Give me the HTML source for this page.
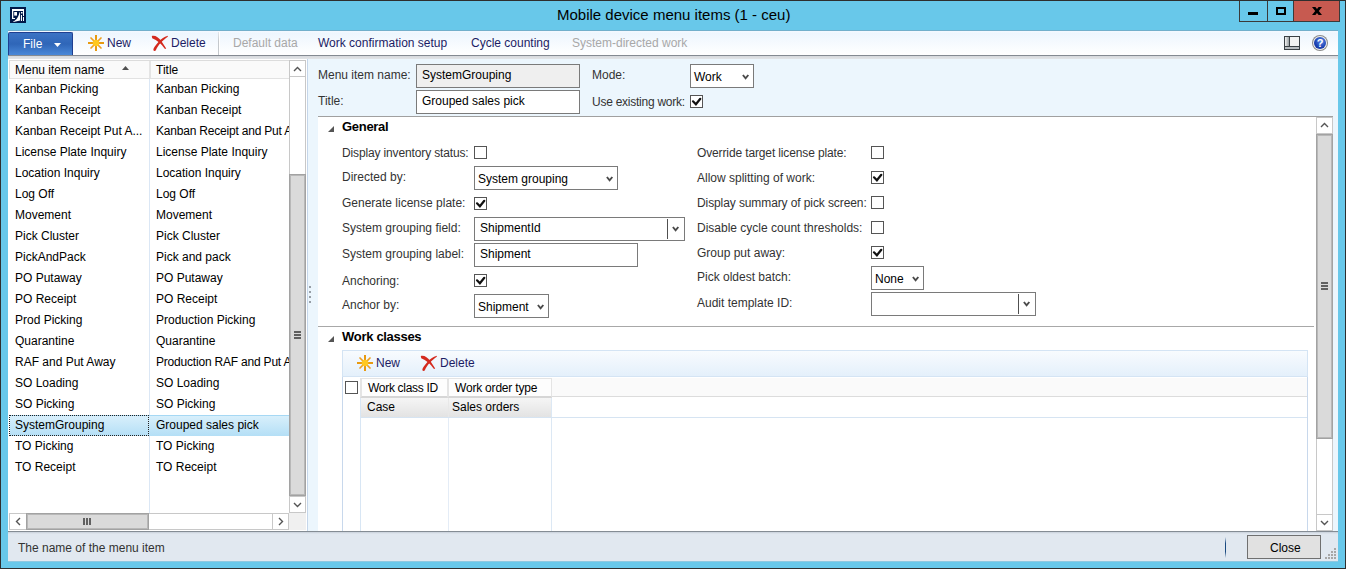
<!DOCTYPE html>
<html><head><meta charset="utf-8">
<style>
*{margin:0;padding:0;box-sizing:border-box}
html,body{width:1346px;height:569px;overflow:hidden;background:#2e2e2e;font-family:"Liberation Sans",sans-serif;font-size:12px;color:#000}
.a{position:absolute}
.t{position:absolute;white-space:nowrap;line-height:15px;height:15px}
#frame{left:1px;top:1px;width:1344px;height:567px;background:#68c8ea}
.cb{position:absolute;width:13px;height:13px;border:1px solid #555;background:#fff}
.inp{position:absolute;border:1px solid #7a7a7a;background:#fff}
.lbl{color:#333}
</style></head><body>
<div id="frame" class="a"></div>
<!-- app icon -->
<svg class="a" style="left:10px;top:7px" width="16" height="16" viewBox="0 0 16 16"><rect width="16" height="16" fill="#001848"/><g fill="#fff"><rect x="2" y="2" width="12" height="2"/><rect x="2" y="2" width="1.3" height="10"/><rect x="2" y="11" width="3" height="1"/><rect x="13" y="2" width="1" height="7"/><rect x="4.2" y="5" width="2.8" height="3.6"/><path d="M3 14.6C5 13.5 8 12.5 9.5 5.3L10 5.3L10.2 13.5C8 14 5.5 14.5 3.5 15Z"/><rect x="11" y="5" width="1.5" height="1.5"/><rect x="11" y="8" width="1" height="6"/><rect x="13" y="10" width="1" height="4"/></g></svg>
<!-- title -->
<div class="t" style="left:557px;top:6px;font-size:15px;line-height:17px;height:17px;color:#000">Mobile device menu items (1 - ceu)</div>
<!-- caption buttons -->
<div class="a" style="left:1239px;top:1px;width:101px;height:21px;border:1px solid #3a3a3a;border-top:none;background:#68c8ea"></div>
<div class="a" style="left:1267px;top:1px;width:1px;height:21px;background:#3a3a3a"></div>
<div class="a" style="left:1293px;top:1px;width:47px;height:21px;border:1px solid #3a3a3a;border-top:none;background:#c75a50"></div>
<div class="a" style="left:1248px;top:12px;width:10px;height:3px;background:#000"></div>
<div class="a" style="left:1276px;top:7px;width:10px;height:8px;border:2px solid #000"></div>
<svg class="a" style="left:1312px;top:7px" width="10" height="8" viewBox="0 0 10 8"><path d="M0 0H3.4L5 2L6.6 0H10L6.8 4L10 8H6.6L5 6L3.4 8H0L3.2 4Z" fill="#000"/></svg>

<!-- client -->
<div class="a" style="left:8px;top:31px;width:1330px;height:530px;background:#eef6fd"></div>
<!-- toolbar -->
<div class="a" style="left:8px;top:30px;width:1330px;height:1px;background:#72afcb"></div>
<div class="a" style="left:8px;top:31px;width:1330px;height:25px;background:linear-gradient(#f4f9ff,#eef6fe 10%,#ffffff);border-bottom:1px solid #848a92"></div>
<div class="a" style="left:8px;top:56px;width:1330px;height:3px;background:linear-gradient(#d6d9dd,#e2e4e7)"></div>
<div class="a" style="left:8px;top:32px;width:65px;height:23px;background:linear-gradient(#3c73c4,#2f66b8 50%,#4a88d8);border:1px solid #1f3f90;border-bottom:none;border-radius:2px 2px 0 0"></div>
<div class="t" style="left:23px;top:37px;color:#fff">File</div>
<svg class="a" style="left:54px;top:43px" width="7" height="4"><path d="M0 0H7L3.5 4Z" fill="#fff"/></svg>
<!-- toolbar items -->
<svg class="a" style="left:88px;top:35px" width="16" height="16" viewBox="0 0 16 16"><g stroke="#e89a10" stroke-width="2"><path d="M8 0V16M0 8H16"/></g><g stroke="#eea020" stroke-width="1.7" stroke-linecap="round"><path d="M3 3L13 13M13 3L3 13"/></g><circle cx="8" cy="8" r="3.3" fill="#ffc820"/></svg>
<div class="t" style="left:107px;top:36px;color:#1c1c64">New</div>
<svg class="a" style="left:148px;top:32px" width="24" height="22" viewBox="0 0 24 22"><path d="M3.8 4C7.5 3.2 10.5 5.5 13 8.6L18.2 16.4L17 17C15 14.2 13.5 12.3 11.2 10.4C9 8.6 6.5 7.2 4.2 6.2Z" fill="#d42a1e"/><path d="M19.8 3.8C16 4.6 12.8 7.3 10.2 10.3C7.6 13.3 5.4 16 5.3 18C5.8 19.3 7.4 19 7.9 18.2C8.9 15.8 10.5 13.2 12.8 10.8C15.2 8.4 17.4 6.3 19.8 4.7Z" fill="#d42a1e"/></svg>
<div class="t" style="left:171px;top:36px;color:#1c1c64">Delete</div>
<div class="a" style="left:218px;top:32px;width:1px;height:23px;background:linear-gradient(#e4e8ec,#c4c8cc 40%,#c4c8cc)"></div><div class="a" style="left:219px;top:32px;width:1px;height:23px;background:#fff"></div>
<div class="t" style="left:233px;top:36px;color:#a8a8a8">Default data</div>
<div class="t" style="left:318px;top:36px;color:#1c1c64">Work confirmation setup</div>
<div class="t" style="left:471px;top:36px;color:#1c1c64">Cycle counting</div>
<div class="t" style="left:572px;top:36px;color:#a8a8a8">System-directed work</div>
<!-- layout icon -->
<div class="a" style="left:1284px;top:36px;width:16px;height:14px;background:#3a4045"></div>
<div class="a" style="left:1285px;top:37px;width:4px;height:9px;background:linear-gradient(90deg,#f4f4f4,#9aa0a4)"></div>
<div class="a" style="left:1290px;top:37px;width:9px;height:9px;background:#f2f2f2"></div>
<div class="a" style="left:1285px;top:47px;width:14px;height:2px;background:#b8bcc0"></div>
<!-- help icon -->
<div class="a" style="left:1312px;top:35px;width:16px;height:16px;border-radius:50%;background:#8a8a8a"></div>
<div class="a" style="left:1313px;top:36px;width:14px;height:14px;border-radius:50%;background:#f0f0f0"></div>
<div class="a" style="left:1314px;top:37px;width:12px;height:12px;border-radius:50%;background:radial-gradient(circle at 60% 35%,#5a8ae8,#1a3fb0 60%,#0a2a90)"></div>
<div class="a" style="left:1316px;top:35px;width:8px;height:16px;font-size:11px;font-weight:bold;color:#fff;text-align:center;line-height:16px">?</div>
<!-- left grid -->
<div class="a" style="left:8px;top:59px;width:300px;height:472px;background:#f6f8fb"></div>
<div class="a" style="left:8px;top:59px;width:299px;height:472px;background:#fff"></div>
<div class="a" style="left:9px;top:60px;width:280px;height:1px;background:#dcdcdc"></div>
<div class="a" style="left:9px;top:60px;width:1px;height:19px;background:#dcdcdc"></div>
<div class="a" style="left:10px;top:61px;width:279px;height:18px;background:#fafafa;border-bottom:1px solid #e2e2e2"></div>
<div class="a" style="left:149px;top:61px;width:2px;height:17px;background:#e4e4e4"></div>
<div class="a" style="left:149px;top:79px;width:1px;height:434px;background:#dbe7f5"></div>
<div class="t" style="left:15px;top:63px">Menu item name</div>
<svg class="a" style="left:122px;top:66px" width="7" height="4"><path d="M0 4H7L3.5 0Z" fill="#505050"/></svg>
<div class="t" style="left:156px;top:63px">Title</div>
<!-- selected row -->
<div class="a" style="left:10px;top:415px;width:279px;height:21px;background:linear-gradient(#a6d8f4 1px,#d8effb 1px,#b4dff6)"></div>
<div class="a" style="left:9px;top:415px;width:140px;height:21px;border:1px dotted #222"></div>
<div class="t" style="left:15px;top:82px">Kanban Picking</div>
<div class="a" style="left:150px;top:61px;width:139px;height:452px;overflow:hidden">
<div class="t" style="left:6px;top:21px">Kanban Picking</div>
<div class="t" style="left:6px;top:42px">Kanban Receipt</div>
<div class="t" style="left:6px;top:63px;letter-spacing:-0.2px">Kanban Receipt and Put Away</div>
<div class="t" style="left:6px;top:84px">License Plate Inquiry</div>
<div class="t" style="left:6px;top:105px">Location Inquiry</div>
<div class="t" style="left:6px;top:126px">Log Off</div>
<div class="t" style="left:6px;top:147px">Movement</div>
<div class="t" style="left:6px;top:168px">Pick Cluster</div>
<div class="t" style="left:6px;top:189px">Pick and pack</div>
<div class="t" style="left:6px;top:210px">PO Putaway</div>
<div class="t" style="left:6px;top:231px">PO Receipt</div>
<div class="t" style="left:6px;top:252px">Production Picking</div>
<div class="t" style="left:6px;top:273px">Quarantine</div>
<div class="t" style="left:6px;top:294px;letter-spacing:-0.2px">Production RAF and Put Away</div>
<div class="t" style="left:6px;top:315px">SO Loading</div>
<div class="t" style="left:6px;top:336px">SO Picking</div>
<div class="t" style="left:6px;top:357px">Grouped sales pick</div>
<div class="t" style="left:6px;top:378px">TO Picking</div>
<div class="t" style="left:6px;top:399px">TO Receipt</div>
</div>
<div class="t" style="left:15px;top:103px">Kanban Receipt</div>
<div class="t" style="left:15px;top:124px">Kanban Receipt Put A...</div>
<div class="t" style="left:15px;top:145px">License Plate Inquiry</div>
<div class="t" style="left:15px;top:166px">Location Inquiry</div>
<div class="t" style="left:15px;top:187px">Log Off</div>
<div class="t" style="left:15px;top:208px">Movement</div>
<div class="t" style="left:15px;top:229px">Pick Cluster</div>
<div class="t" style="left:15px;top:250px">PickAndPack</div>
<div class="t" style="left:15px;top:271px">PO Putaway</div>
<div class="t" style="left:15px;top:292px">PO Receipt</div>
<div class="t" style="left:15px;top:313px">Prod Picking</div>
<div class="t" style="left:15px;top:334px">Quarantine</div>
<div class="t" style="left:15px;top:355px">RAF and Put Away</div>
<div class="t" style="left:15px;top:376px">SO Loading</div>
<div class="t" style="left:15px;top:397px">SO Picking</div>
<div class="t" style="left:15px;top:418px">SystemGrouping</div>
<div class="t" style="left:15px;top:439px">TO Picking</div>
<div class="t" style="left:15px;top:460px">TO Receipt</div>
<!-- clip overlay for col2 at scrollbar -->
<!-- v scrollbar -->
<div class="a" style="left:289px;top:60px;width:17px;height:453px;background:#fff;border:1px solid #c8c8c8;border-width:0 1px"></div>
<div class="a" style="left:289px;top:60px;width:17px;height:17px;background:#fff;border:1px solid #c8c8c8"></div>
<svg class="a" style="left:293px;top:66px" width="9" height="6"><path d="M1 5L4.5 1.5L8 5" stroke="#555" stroke-width="1.4" fill="none"/></svg>
<div class="a" style="left:289px;top:174px;width:17px;height:322px;background:#dadada;border:1px solid #a2a2a2;box-shadow:inset 1px 1px #b8b8b8,inset -1px -1px #b8b8b8"></div>
<div class="a" style="left:294px;top:331px;width:7px;height:2px;background:#606060"></div>
<div class="a" style="left:294px;top:334px;width:7px;height:2px;background:#606060"></div>
<div class="a" style="left:294px;top:337px;width:7px;height:2px;background:#606060"></div>
<div class="a" style="left:289px;top:496px;width:17px;height:17px;background:#fff;border:1px solid #c8c8c8"></div>
<svg class="a" style="left:293px;top:502px" width="9" height="6"><path d="M1 1L4.5 4.5L8 1" stroke="#555" stroke-width="1.4" fill="none"/></svg>
<!-- h scrollbar -->
<div class="a" style="left:9px;top:513px;width:280px;height:17px;background:#fff;border:1px solid #c8c8c8"></div>
<div class="a" style="left:9px;top:513px;width:18px;height:17px;background:#fff;border:1px solid #c8c8c8"></div>
<svg class="a" style="left:15px;top:517px" width="6" height="9"><path d="M5 1L1.5 4.5L5 8" stroke="#555" stroke-width="1.4" fill="none"/></svg>
<div class="a" style="left:26px;top:513px;width:123px;height:17px;background:#dadada;border:1px solid #a2a2a2;box-shadow:inset 1px 1px #b8b8b8,inset -1px -1px #b8b8b8"></div>
<div class="a" style="left:83px;top:518px;width:2px;height:7px;background:#606060"></div>
<div class="a" style="left:86px;top:518px;width:2px;height:7px;background:#606060"></div>
<div class="a" style="left:89px;top:518px;width:2px;height:7px;background:#606060"></div>
<div class="a" style="left:272px;top:513px;width:17px;height:17px;background:#fff;border:1px solid #c8c8c8"></div>
<svg class="a" style="left:278px;top:517px" width="6" height="9"><path d="M1 1L4.5 4.5L1 8" stroke="#555" stroke-width="1.4" fill="none"/></svg>
<div class="a" style="left:289px;top:513px;width:17px;height:17px;background:#f0f0f0"></div>
<!-- form header -->
<div class="a" style="left:308px;top:59px;width:1030px;height:472px;background:#ecf6fd"></div>
<!-- splitter -->
<div class="a" style="left:307px;top:59px;width:1px;height:472px;background:#c5d6ea"></div>
<div class="a" style="left:309px;top:286px;width:2px;height:2px;background:#979ea6"></div>
<div class="a" style="left:309px;top:291px;width:2px;height:2px;background:#979ea6"></div>
<div class="a" style="left:309px;top:296px;width:2px;height:2px;background:#979ea6"></div>
<div class="a" style="left:309px;top:301px;width:2px;height:2px;background:#979ea6"></div>

<div class="t lbl" style="left:318px;top:68px">Menu item name:</div>
<div class="inp" style="left:416px;top:64px;width:164px;height:24px;background:#efefef"></div>
<div class="t" style="left:422px;top:68px">SystemGrouping</div>
<div class="t lbl" style="left:318px;top:94px">Title:</div>
<div class="inp" style="left:416px;top:90px;width:164px;height:24px"></div>
<div class="t" style="left:422px;top:94px">Grouped sales pick</div>
<div class="t lbl" style="left:592px;top:68px">Mode:</div>
<div class="inp" style="left:690px;top:64px;width:64px;height:24px"></div>
<div class="t" style="left:694px;top:70px">Work</div>
<svg class="a" style="left:742px;top:74px" width="8" height="6"><path d="M0.9 1L3.6 4.3L6.3 1" stroke="#4a4a4a" stroke-width="1.9" fill="none"/></svg>
<div class="t lbl" style="left:592px;top:95px;letter-spacing:-0.25px">Use existing work:</div>
<div class="cb" style="left:690px;top:95px"></div>
<svg class="a" style="left:690px;top:95px" width="13" height="13"><path d="M3 6.3L5.9 9.3L10.3 3.8" stroke="#111" stroke-width="2.2" fill="none" stroke-linecap="round"/></svg>
<!-- fasttab container -->
<div class="a" style="left:318px;top:116px;width:1015px;height:415px;background:#fff;border-top:1px solid #a0a0a0"></div>
<svg class="a" style="left:328px;top:126px" width="6" height="6"><path d="M6 0V6H0Z" fill="#555"/></svg>
<div class="t" style="left:342px;top:119px;font-weight:bold;font-size:13px;letter-spacing:-0.3px">General</div>
<div class="t lbl" style="left:342px;top:146px;letter-spacing:-0.14px">Display inventory status:</div>
<div class="cb" style="left:474px;top:146px"></div>
<div class="t lbl" style="left:342px;top:170px">Directed by:</div>
<div class="inp" style="left:474px;top:166px;width:144px;height:24px"></div>
<div class="t" style="left:478px;top:172px">System grouping</div>
<svg class="a" style="left:606px;top:176px" width="8" height="6"><path d="M0.9 1L3.6 4.3L6.3 1" stroke="#4a4a4a" stroke-width="1.9" fill="none"/></svg>
<div class="t lbl" style="left:342px;top:196px">Generate license plate:</div>
<div class="cb" style="left:474px;top:197px"></div>
<svg class="a" style="left:474px;top:197px" width="13" height="13"><path d="M3 6.3L5.9 9.3L10.3 3.8" stroke="#111" stroke-width="2.2" fill="none" stroke-linecap="round"/></svg>
<div class="t lbl" style="left:342px;top:221px">System grouping field:</div>
<div class="inp" style="left:474px;top:217px;width:211px;height:24px"></div>
<div class="t" style="left:480px;top:221px">ShipmentId</div>
<div class="a" style="left:667px;top:219px;width:1px;height:20px;background:#505050"></div>
<svg class="a" style="left:672px;top:226px" width="8" height="6"><path d="M0.9 1L3.6 4.3L6.3 1" stroke="#4a4a4a" stroke-width="1.9" fill="none"/></svg>
<div class="t lbl" style="left:342px;top:247px">System grouping label:</div>
<div class="inp" style="left:474px;top:243px;width:164px;height:24px"></div>
<div class="t" style="left:480px;top:247px">Shipment</div>
<div class="t lbl" style="left:342px;top:274px">Anchoring:</div>
<div class="cb" style="left:474px;top:274px"></div>
<svg class="a" style="left:474px;top:274px" width="13" height="13"><path d="M3 6.3L5.9 9.3L10.3 3.8" stroke="#111" stroke-width="2.2" fill="none" stroke-linecap="round"/></svg>
<div class="t lbl" style="left:342px;top:298px">Anchor by:</div>
<div class="inp" style="left:474px;top:294px;width:75px;height:24px"></div>
<div class="t" style="left:478px;top:300px">Shipment</div>
<svg class="a" style="left:537px;top:304px" width="8" height="6"><path d="M0.9 1L3.6 4.3L6.3 1" stroke="#4a4a4a" stroke-width="1.9" fill="none"/></svg>
<div class="t lbl" style="left:697px;top:146px;letter-spacing:-0.13px">Override target license plate:</div>
<div class="cb" style="left:871px;top:146px"></div>
<div class="t lbl" style="left:697px;top:171px">Allow splitting of work:</div>
<div class="cb" style="left:871px;top:171px"></div>
<svg class="a" style="left:871px;top:171px" width="13" height="13"><path d="M3 6.3L5.9 9.3L10.3 3.8" stroke="#111" stroke-width="2.2" fill="none" stroke-linecap="round"/></svg>
<div class="t lbl" style="left:697px;top:196px;letter-spacing:-0.1px">Display summary of pick screen:</div>
<div class="cb" style="left:871px;top:196px"></div>
<div class="t lbl" style="left:697px;top:221px">Disable cycle count thresholds:</div>
<div class="cb" style="left:871px;top:221px"></div>
<div class="t lbl" style="left:697px;top:246px">Group put away:</div>
<div class="cb" style="left:871px;top:246px"></div>
<svg class="a" style="left:871px;top:246px" width="13" height="13"><path d="M3 6.3L5.9 9.3L10.3 3.8" stroke="#111" stroke-width="2.2" fill="none" stroke-linecap="round"/></svg>
<div class="t lbl" style="left:697px;top:270px">Pick oldest batch:</div>
<div class="inp" style="left:871px;top:266px;width:53px;height:24px"></div>
<div class="t" style="left:875px;top:272px">None</div>
<svg class="a" style="left:912px;top:276px" width="8" height="6"><path d="M0.9 1L3.6 4.3L6.3 1" stroke="#4a4a4a" stroke-width="1.9" fill="none"/></svg>
<div class="t lbl" style="left:697px;top:296px">Audit template ID:</div>
<div class="inp" style="left:871px;top:292px;width:165px;height:24px"></div>
<div class="a" style="left:1018px;top:294px;width:1px;height:20px;background:#505050"></div>
<svg class="a" style="left:1023px;top:301px" width="8" height="6"><path d="M0.9 1L3.6 4.3L6.3 1" stroke="#4a4a4a" stroke-width="1.9" fill="none"/></svg>

<!-- section line -->
<div class="a" style="left:318px;top:326px;width:996px;height:1px;background:#a8a8a8"></div>
<!-- Work classes -->
<svg class="a" style="left:328px;top:336px" width="6" height="6"><path d="M6 0V6H0Z" fill="#555"/></svg>
<div class="t" style="left:342px;top:329px;font-weight:bold;font-size:13px;letter-spacing:-0.3px">Work classes</div>
<div class="a" style="left:342px;top:350px;width:966px;height:27px;background:linear-gradient(#f8fbfe,#e4f0fb);border:1px solid #d4e4f4"></div>
<svg class="a" style="left:357px;top:355px" width="16" height="16" viewBox="0 0 16 16"><g stroke="#e89a10" stroke-width="2"><path d="M8 0V16M0 8H16"/></g><g stroke="#eea020" stroke-width="1.7" stroke-linecap="round"><path d="M3 3L13 13M13 3L3 13"/></g><circle cx="8" cy="8" r="3.3" fill="#ffc820"/></svg>
<div class="t" style="left:376px;top:356px;color:#1c1c64">New</div>
<svg class="a" style="left:417px;top:352px" width="24" height="22" viewBox="0 0 24 22"><path d="M3.8 4C7.5 3.2 10.5 5.5 13 8.6L18.2 16.4L17 17C15 14.2 13.5 12.3 11.2 10.4C9 8.6 6.5 7.2 4.2 6.2Z" fill="#d42a1e"/><path d="M19.8 3.8C16 4.6 12.8 7.3 10.2 10.3C7.6 13.3 5.4 16 5.3 18C5.8 19.3 7.4 19 7.9 18.2C8.9 15.8 10.5 13.2 12.8 10.8C15.2 8.4 17.4 6.3 19.8 4.7Z" fill="#d42a1e"/></svg>
<div class="t" style="left:440px;top:356px;color:#1c1c64">Delete</div>
<!-- work classes grid -->
<div class="a" style="left:342px;top:377px;width:966px;height:160px;background:#fff;border:1px solid #c8d8ec;border-top:none"></div>
<div class="a" style="left:552px;top:378px;width:755px;height:19px;background:#fafafa;border-bottom:1px solid #dcdcdc"></div>
<div class="cb" style="left:345px;top:381px"></div>
<div class="a" style="left:360px;top:378px;width:88px;height:20px;background:#fdfdfd;border:1px solid #e4e4e4;border-width:1px 1px 2px 2px;border-bottom-color:#d6d6d6"></div>
<div class="a" style="left:448px;top:378px;width:104px;height:20px;background:#fdfdfd;border:1px solid #e4e4e4;border-width:1px 1px 2px 1px;border-bottom-color:#d6d6d6"></div>
<div class="t" style="left:368px;top:381px;letter-spacing:-0.3px">Work class ID</div>
<div class="t" style="left:455px;top:381px;letter-spacing:-0.2px">Work order type</div>
<div class="a" style="left:360px;top:398px;width:1px;height:139px;background:#d8e6f4"></div>
<div class="a" style="left:361px;top:398px;width:190px;height:19px;background:linear-gradient(#f5f5f5,#e3e3e3)"></div>
<div class="a" style="left:448px;top:398px;width:1px;height:19px;background:#e8e8e8"></div>
<div class="a" style="left:448px;top:417px;width:1px;height:120px;background:#e4ecf6"></div>
<div class="a" style="left:551px;top:398px;width:1px;height:139px;background:#dce8f4"></div>
<div class="a" style="left:361px;top:417px;width:946px;height:1px;background:#d6e4f2"></div>
<div class="t" style="left:367px;top:400px">Case</div>
<div class="t" style="left:452px;top:400px">Sales orders</div>

<!-- right scrollbar -->
<div class="a" style="left:1316px;top:117px;width:17px;height:414px;background:#fff;border:1px solid #c8c8c8;border-width:0 1px"></div>
<div class="a" style="left:1316px;top:117px;width:17px;height:17px;background:#fff;border:1px solid #c8c8c8"></div>
<svg class="a" style="left:1320px;top:122px" width="9" height="6"><path d="M1 5L4.5 1.5L8 5" stroke="#555" stroke-width="1.4" fill="none"/></svg>
<div class="a" style="left:1316px;top:134px;width:17px;height:305px;background:#dadada;border:1px solid #a2a2a2;box-shadow:inset 1px 1px #b8b8b8,inset -1px -1px #b8b8b8"></div>
<div class="a" style="left:1321px;top:282px;width:7px;height:2px;background:#606060"></div>
<div class="a" style="left:1321px;top:285px;width:7px;height:2px;background:#606060"></div>
<div class="a" style="left:1321px;top:288px;width:7px;height:2px;background:#606060"></div>
<div class="a" style="left:1316px;top:514px;width:17px;height:17px;background:#fff;border:1px solid #c8c8c8"></div>
<svg class="a" style="left:1320px;top:520px" width="9" height="6"><path d="M1 1L4.5 4.5L8 1" stroke="#555" stroke-width="1.4" fill="none"/></svg>

<!-- status bar -->
<div class="a" style="left:8px;top:531px;width:1330px;height:30px;background:linear-gradient(#c8d0da,#e1e8f0 2px);border-top:1px solid #848c94"></div>
<div class="a" style="left:8px;top:561px;width:1330px;height:1px;background:#8ec8e0"></div>
<div class="t" style="left:18px;top:541px;color:#333">The name of the menu item</div>
<div class="a" style="left:1225px;top:537px;width:1px;height:21px;background:linear-gradient(transparent,#1a4a80 30%,#1a4a80 70%,transparent)"></div>
<div class="a" style="left:1247px;top:535px;width:74px;height:24px;background:#e1e1e1;border:1px solid #707070"></div>
<div class="t" style="left:1270px;top:541px">Close</div>

<div class="a" style="left:1334px;top:548px;width:2px;height:2px;background:#a6a6a6"></div>
<div class="a" style="left:1331px;top:551px;width:2px;height:2px;background:#a6a6a6"></div>
<div class="a" style="left:1334px;top:551px;width:2px;height:2px;background:#a6a6a6"></div>
<div class="a" style="left:1328px;top:554px;width:2px;height:2px;background:#a6a6a6"></div>
<div class="a" style="left:1331px;top:554px;width:2px;height:2px;background:#a6a6a6"></div>
<div class="a" style="left:1334px;top:554px;width:2px;height:2px;background:#a6a6a6"></div>
<div class="a" style="left:1325px;top:557px;width:2px;height:2px;background:#a6a6a6"></div>
<div class="a" style="left:1328px;top:557px;width:2px;height:2px;background:#a6a6a6"></div>
<div class="a" style="left:1331px;top:557px;width:2px;height:2px;background:#a6a6a6"></div>
<div class="a" style="left:1334px;top:557px;width:2px;height:2px;background:#a6a6a6"></div>
</body></html>
